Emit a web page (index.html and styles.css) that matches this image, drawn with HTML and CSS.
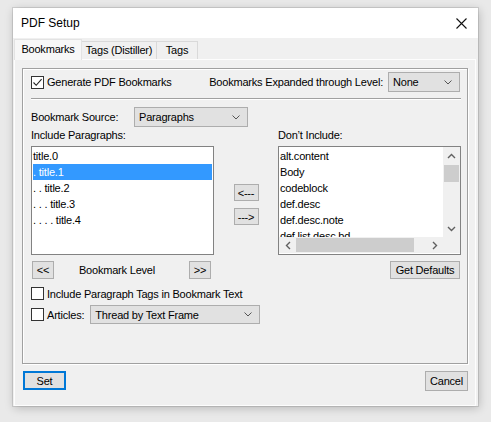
FILE: index.html
```html
<!DOCTYPE html>
<html>
<head>
<meta charset="utf-8">
<link rel="stylesheet" href="styles.css">
</head>
<body>
<div class="window">
  <div class="titlebar">
    <span class="title">PDF Setup</span>
    <svg class="close" width="11" height="11" viewBox="0 0 11 11"><path d="M0.5 0.5 L10.5 10.5 M10.5 0.5 L0.5 10.5" stroke="#111" stroke-width="1.1" fill="none"/></svg>
  </div>
  <div class="client">
    <div class="tabs">
      <div class="tab active tab-bm">Bookmarks</div>
      <div class="tab tab-td">Tags (Distiller)</div>
      <div class="tab tab-t">Tags</div>
    </div>
    <div class="tabpage">
      <div class="groupbox">
        <div class="row row-top">
          <label class="check"><span class="box checked"><svg width="11" height="11" viewBox="0 0 11 11"><path d="M1.5 5.5 L4.2 8.3 L9.6 2.2" fill="none" stroke="#222" stroke-width="1.1"/></svg></span>Generate PDF Bookmarks</label>
          <div class="expand">
            <span>Bookmarks Expanded through Level:</span>
            <div class="select sel-none"><span>None</span><svg width="8" height="5" viewBox="0 0 8 5"><path d="M0.5 0.5 L4 4 L7.5 0.5" fill="none" stroke="#555"/></svg></div>
          </div>
        </div>
        <div class="separator"></div>
        <div class="row row-source">
          <span class="source-label">Bookmark Source:</span>
          <div class="select sel-para"><span>Paragraphs</span><svg width="8" height="5" viewBox="0 0 8 5"><path d="M0.5 0.5 L4 4 L7.5 0.5" fill="none" stroke="#555"/></svg></div>
        </div>
        <div class="columns">
          <div class="col">
            <div class="col-label">Include Paragraphs:</div>
            <div class="listbox">
              <div class="item">title.0</div>
              <div class="item selected">. title.1</div>
              <div class="item">. . title.2</div>
              <div class="item">. . . title.3</div>
              <div class="item">. . . . title.4</div>
            </div>
            <div class="level-row">
              <button class="btn small">&lt;&lt;</button>
              <span class="level-text">Bookmark Level</span>
              <button class="btn small">&gt;&gt;</button>
            </div>
          </div>
          <div class="movers">
            <button class="btn mover">&lt;---</button>
            <button class="btn mover">---&gt;</button>
          </div>
          <div class="col">
            <div class="col-label">Don’t Include:</div>
            <div class="listbox scrolled">
              <div class="items">
                <div class="item">alt.content</div>
                <div class="item">Body</div>
                <div class="item">codeblock</div>
                <div class="item">def.desc</div>
                <div class="item">def.desc.note</div>
                <div class="item">def.list.desc.bd</div>
              </div>
              <div class="vscroll">
                <div class="arrow"><svg width="9" height="6" viewBox="0 0 9 6"><path d="M1 5 L4.5 1.5 L8 5" fill="none" stroke="#606060" stroke-width="1.4"/></svg></div>
                <div class="vtrack"><div class="vthumb"></div></div>
                <div class="arrow"><svg width="9" height="6" viewBox="0 0 9 6"><path d="M1 1 L4.5 4.5 L8 1" fill="none" stroke="#606060" stroke-width="1.4"/></svg></div>
              </div>
              <div class="hscroll">
                <div class="arrow"><svg width="6" height="9" viewBox="0 0 6 9"><path d="M5 1 L1.5 4.5 L5 8" fill="none" stroke="#606060" stroke-width="1.4"/></svg></div>
                <div class="htrack"><div class="hthumb"></div></div>
                <div class="arrow"><svg width="6" height="9" viewBox="0 0 6 9"><path d="M1 1 L4.5 4.5 L1 8" fill="none" stroke="#606060" stroke-width="1.4"/></svg></div>
              </div>
              <div class="corner"></div>
            </div>
            <div class="defaults-row">
              <button class="btn defaults">Get Defaults</button>
            </div>
          </div>
        </div>
        <div class="row row-tags">
          <label class="check"><span class="box"></span>Include Paragraph Tags in Bookmark Text</label>
        </div>
        <div class="row row-articles">
          <label class="check"><span class="box"></span>Articles:</label>
          <div class="select sel-thread"><span>Thread by Text Frame</span><svg width="8" height="5" viewBox="0 0 8 5"><path d="M0.5 0.5 L4 4 L7.5 0.5" fill="none" stroke="#555"/></svg></div>
        </div>
      </div>
      <div class="footer">
        <button class="btn action default">Set</button>
        <button class="btn action cancel">Cancel</button>
      </div>
    </div>
  </div>
</div>
</body>
</html>
```

FILE: styles.css
```css
* { box-sizing: border-box; }
html, body { margin: 0; padding: 0; }
body {
  width: 491px;
  height: 422px;
  overflow: hidden;
  background: #e9e9e9;
  font-family: "Liberation Sans", Arial, sans-serif;
  font-size: 11px;
  letter-spacing: -0.2px;
  color: #000;
}
.window {
  margin: 8px 0 0 13px;
  width: 465px;
  height: 398px;
  background: #f0f0f0;
  box-shadow: 0 0 0 1px rgba(0,0,0,0.10), 1px 2px 9px rgba(0,0,0,0.22);
  display: flex;
  flex-direction: column;
}
.titlebar {
  height: 30px;
  flex: none;
  background: #fff;
  display: flex;
  align-items: center;
  justify-content: space-between;
  padding: 0 11px 0 8px;
}
.title { font-size: 12px; letter-spacing: 0; }
.close { display: block; margin-top: 1px; }
.client {
  flex: 1;
  display: flex;
  flex-direction: column;
  padding: 1px 2px 0 1px;
}
.tabs {
  height: 21px;
  display: flex;
  align-items: flex-end;
  flex: none;
}
.tab {
  height: 19px;
  border: 1px solid #d9d9d9;
  border-bottom: none;
  background: #f0f0f0;
  text-align: center;
  line-height: 17px;
  margin-left: -1px;
}
.tab.active {
  height: 21px;
  line-height: 19px;
  background: #f7f7f7;
  border-color: #e3e3e3;
  position: relative;
  z-index: 1;
  margin-left: 0;
}
.tab-bm { width: 68px; }
.tab-td { width: 76px; }
.tab-t { width: 42px; }
.tabpage {
  flex: 1;
  margin-top: -1px;
  border: 1px solid #fdfdfd;
  padding: 8px 7px 0 7px;
}
.groupbox {
  height: 296px;
  border: 1px solid #a0a0a0;
  box-shadow: inset 1px 1px 0 #fff, 1px 1px 0 #fff;
  padding: 3px 6px 0 8px;
}
.row { display: flex; align-items: center; }
.row-top { height: 20px; justify-content: space-between; }
.check { display: flex; align-items: center; white-space: nowrap; }
.box {
  width: 13px;
  height: 13px;
  border: 1px solid #333;
  background: #fff;
  margin-right: 3px;
  display: flex;
  align-items: center;
  justify-content: center;
  flex: none;
}
.box svg { display: block; }
.expand { display: flex; align-items: center; gap: 5px; }
.select {
  height: 20px;
  background: #e1e1e1;
  border: 1px solid #adadad;
  display: flex;
  align-items: center;
  justify-content: space-between;
  padding: 0 7px 0 4px;
}
.select svg { display: block; }
.sel-none { width: 72px; margin-right: 1px; }
.separator {
  margin-top: 6px;
  height: 2px;
  border-top: 1px solid #a0a0a0;
  border-bottom: 1px solid #fff;
}
.row-source { margin-top: 7px; height: 20px; }
.source-label { width: 103px; }
.sel-para { width: 114px; }
.columns {
  display: flex;
  justify-content: space-between;
  margin-top: 1px;
}
.col { width: 183px; display: flex; flex-direction: column; }
.col-label { height: 14px; line-height: 14px; }
.listbox {
  margin-top: 4px;
  height: 109px;
  background: #fff;
  border: 1px solid #828282;
  padding: 1px 0 0 0;
  overflow: hidden;
  position: relative;
}
.item {
  height: 16px;
  line-height: 16px;
  margin: 0 1px;
  white-space: nowrap;
}
.item.selected { background: #3399ff; color: #fff; }
.listbox.scrolled {
  padding: 0;
  display: grid;
  grid-template-columns: 1fr 17px;
  grid-template-rows: 90px 16px;
}
.items { padding-top: 1px; overflow: hidden; }
.vscroll {
  display: flex;
  flex-direction: column;
  background: #f0f0f0;
}
.vscroll .arrow {
  height: 17px;
  display: flex;
  align-items: center;
  justify-content: center;
}
.vtrack { flex: 1; }
.vthumb { height: 17px; background: #cdcdcd; margin: 1px 1px 0 1px; }
.hscroll {
  display: flex;
  background: #f0f0f0;
}
.hscroll .arrow {
  width: 17px;
  display: flex;
  align-items: center;
  justify-content: center;
}
.htrack { flex: 1; padding: 1px 0 0 0; }
.hthumb { width: 118px; height: 14px; background: #cdcdcd; }
.corner { background: #f0f0f0; }
.movers {
  display: flex;
  flex-direction: column;
  gap: 7px;
  margin-top: 56px;
  width: 25px;
}
.btn {
  font-family: inherit;
  font-size: 11px;
  letter-spacing: -0.2px;
  color: #000;
  background: #e1e1e1;
  border: 1px solid #adadad;
  padding: 0;
  margin: 0;
  display: flex;
  align-items: center;
  justify-content: center;
}
.mover { width: 25px; height: 17px; }
.level-row {
  margin-top: 6px;
  height: 18px;
  display: flex;
  align-items: center;
  justify-content: space-between;
  padding: 0 3px 0 1px;
}
.small { width: 22px; height: 18px; }
.level-text { margin-right: 9px; }
.defaults-row {
  margin-top: 6px;
  height: 18px;
  display: flex;
  justify-content: flex-end;
  padding-right: 1px;
}
.defaults { width: 70px; height: 18px; }
.row-tags { margin-top: 8px; height: 13px; }
.row-articles { margin-top: 5px; height: 19px; }
.sel-thread { width: 170px; height: 19px; margin-left: 6px; }
.footer {
  margin-top: 7px;
  display: flex;
  justify-content: space-between;
  align-items: flex-start;
}
.action { width: 43px; height: 19px; }
.default { margin-left: 1px; border: 2px solid #0078d7; }
.cancel { height: 20px; }
```
